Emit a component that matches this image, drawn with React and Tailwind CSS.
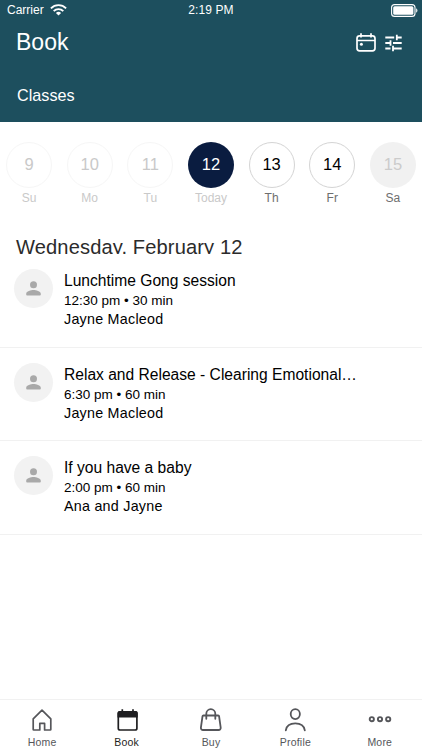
import React from 'react';
import clsx from 'clsx';

const days = [
  { date: 9, label: 'Su', state: 'past' },
  { date: 10, label: 'Mo', state: 'past' },
  { date: 11, label: 'Tu', state: 'past' },
  { date: 12, label: 'Today', state: 'selected' },
  { date: 13, label: 'Th', state: 'open' },
  { date: 14, label: 'Fr', state: 'open' },
  { date: 15, label: 'Sa', state: 'empty' },
];

const classes = [
  { title: 'Lunchtime Gong session', time: '12:30 pm • 30 min', teacher: 'Jayne Macleod' },
  { title: 'Relax and Release - Clearing Emotional…', time: '6:30 pm • 60 min', teacher: 'Jayne Macleod' },
  { title: 'If you have a baby', time: '2:00 pm • 60 min', teacher: 'Ana and Jayne' },
];

const circleStyles = {
  past: 'border border-[#f6f6f6] text-[#c9c9c9]',
  selected: 'bg-[#0a1c40] text-white',
  open: 'border border-[#d4d4d4] text-black',
  empty: 'bg-[#f1f1f1] text-[#cbcbcb]',
};

const WifiIcon = () => (
  <svg width="17" height="12" viewBox="0 0 17 12" fill="none" stroke="white" strokeWidth="1.9">
    <path d="M0.9 4.3a10.8 10.8 0 0 1 15.2 0" />
    <path d="M3.7 7.1a6.8 6.8 0 0 1 9.6 0" />
    <path d="M8.5 11.6L5.9 9a3.7 3.7 0 0 1 5.2 0z" fill="white" stroke="none" />
  </svg>
);

const BatteryIcon = () => (
  <svg width="27" height="13" viewBox="0 0 27 13" fill="none">
    <rect x="0.6" y="0.6" width="23.4" height="11.8" rx="3" stroke="white" strokeWidth="1.1" />
    <rect x="2.2" y="2.2" width="20.2" height="8.6" rx="1.5" fill="white" />
    <path d="M25.2 4.3c1.7 0.7 1.7 3.7 0 4.4z" fill="white" />
  </svg>
);

const CalendarIcon = () => (
  <svg width="20" height="19" viewBox="0 0 20 19" fill="none" stroke="white" strokeWidth="1.7">
    <rect x="1" y="2.8" width="18" height="15" rx="2.6" />
    <path d="M1 7.5h18M5 0.3v4.2M15 0.3v4.2" />
    <circle cx="5.4" cy="11.3" r="1.5" fill="white" stroke="none" />
  </svg>
);

const TuneIcon = () => (
  <svg width="17" height="18" viewBox="0 0 17 18" fill="none" stroke="white" strokeWidth="1.8">
    <path d="M0.3 3.5h8.9M11.8 3.5h4.9M11.8 0.8v5.4" />
    <path d="M0.3 9h4.9M8 9h8.7M5.5 6.3v5.4" />
    <path d="M0.3 14.5h5.2M7.8 14.5h8.9M8 11.8v5.4" />
  </svg>
);

const PersonIcon = () => (
  <svg width="15" height="15" viewBox="0 0 15 15" fill="#a9a9a9">
    <circle cx="7.5" cy="3.7" r="3.5" />
    <path d="M0.2 12.7c0-2.4 4.9-3.7 7.3-3.7s7.3 1.3 7.3 3.7v0.9a0.9 0.9 0 0 1-0.9 0.9H1.1a0.9 0.9 0 0 1-0.9-0.9z" />
  </svg>
);

const HomeIcon = () => (
  <svg width="24" height="24" viewBox="0 0 24 24" fill="none" stroke="#55565a" strokeWidth="1.7" strokeLinejoin="round">
    <path d="M3.2 10.8L12 2.2l8.8 8.6v10.6a0.6 0.6 0 0 1-0.6 0.6h-5.6v-6.6H9.8V22H3.8a0.6 0.6 0 0 1-0.6-0.6z" />
  </svg>
);

const BookIcon = () => (
  <svg width="24" height="24" viewBox="0 0 24 24" fill="none" stroke="#1f1f21" strokeWidth="1.7">
    <rect x="3.3" y="3.8" width="18.6" height="18.2" rx="1.8" />
    <path d="M2.5 9.5V5a2 2 0 0 1 2-2h16.200a2 2 0 0 1 2 2v4.500z" fill="#1f1f21" stroke="none" />
    <path d="M7.3 1.200v3M18 1.200v3" />
  </svg>
);

const BagIcon = () => (
  <svg width="24" height="24" viewBox="0 0 24 24" fill="none" stroke="#55565a" strokeWidth="1.8" strokeLinecap="round" strokeLinejoin="round">
    <path d="M4.5 7.5h14.6a1 1 0 0 1 1 0.8l1.6 11.3a2.1 2.1 0 0 1-2.1 2.4H4a2.1 2.1 0 0 1-2.1-2.4L3.5 8.3a1 1 0 0 1 1-0.8z" />
    <path d="M7.3 10.8V5.700a4.500 4.500 0 0 1 9 0v5.100" />
  </svg>
);

const ProfileIcon = () => (
  <svg width="24" height="24" viewBox="0 0 24 24" fill="none" stroke="#55565a" strokeWidth="1.8" strokeLinecap="round">
    <ellipse cx="12.300" cy="6.100" rx="4.600" ry="5" />
    <path d="M2.800 22.300c0.700-4.400 4.200-6.900 9.500-6.900s8.800 2.500 9.500 6.900" />
  </svg>
);

const MoreIcon = () => (
  <svg width="24" height="24" viewBox="0 0 24 24" fill="none" stroke="#55565a" strokeWidth="1.9">
    <circle cx="3.8" cy="11.2" r="2.1" />
    <circle cx="12" cy="11.2" r="2.1" />
    <circle cx="20.2" cy="11.2" r="2.1" />
  </svg>
);

const tabs = [
  { label: 'Home', icon: HomeIcon },
  { label: 'Book', icon: BookIcon, active: true },
  { label: 'Buy', icon: BagIcon },
  { label: 'Profile', icon: ProfileIcon },
  { label: 'More', icon: MoreIcon },
];

const Header = () => (
  <header className="h-[122px] shrink-0 bg-[#1d4f5e] text-white">
    {/* Status bar */}
    <div className="grid h-5 grid-cols-3 items-center pl-[7px] pr-1 text-[12px]">
      <div className="flex items-center gap-1.5">
        <span>Carrier</span>
        <WifiIcon />
      </div>
      <span className="pr-[3px] text-center tracking-[0.1px]">2:19 PM</span>
      <div className="flex justify-end">
        <BatteryIcon />
      </div>
    </div>

    <div className="flex h-[45px] items-center justify-between pl-4 pr-5">
      <h1 className="pb-0.5 text-[23px] leading-[34px]">Book</h1>
      <div className="flex items-center gap-[9px]">
        <CalendarIcon />
        <TuneIcon />
      </div>
    </div>

    <h2 className="mt-[18px] pl-[17px] text-[16.2px] leading-6">Classes</h2>
  </header>
);

const DayPicker = () => (
  <div className="flex h-[88px] justify-between px-[6px] pt-[19.5px]">
    {days.map((day) => (
      <div key={day.date} className="flex w-[46px] flex-col items-center">
        <div className={clsx('flex size-[46px] shrink-0 items-center justify-center rounded-full text-[16.5px]', circleStyles[day.state])}>
          {day.date}
        </div>
        <span
          className={clsx(
            'mt-[2px] text-[12px] leading-[17px]',
            day.state === 'past' || day.state === 'selected' ? 'text-[#c9c9c9]' : 'text-[#6e6e6e]'
          )}
        >
          {day.label}
        </span>
      </div>
    ))}
  </div>
);

const ClassRow = ({ title, time, teacher }) => (
  <li className="flex h-[93.7px] border-b border-[#f1f1f1] pl-[14px] pt-[15px]">
    <div className="flex size-[39px] shrink-0 items-center justify-center rounded-full bg-[#f2f2f2]">
      <PersonIcon />
    </div>
    <div className="ml-[11px] mt-px whitespace-nowrap text-black">
      <h3 className="text-[15.6px] leading-[22px]">{title}</h3>
      <p className="text-[13.5px] leading-[18px]">{time}</p>
      <p className="text-[14.3px] leading-[19px] tracking-[0.25px]">{teacher}</p>
    </div>
  </li>
);

const TabBar = () => (
  <nav className="grid h-[51px] shrink-0 grid-cols-5 border-t border-[#f1f1f1]">
    {tabs.map(({ label, icon: Icon, active }) => (
      <a key={label} className={clsx('flex flex-col items-center pt-2 text-[10.5px]', active ? 'text-[#1f1f21]' : 'text-[#55565a]')}>
        <Icon />
        <span className="mt-[3px] leading-[15px] tracking-[0.2px]">{label}</span>
      </a>
    ))}
  </nav>
);

export default function App() {
  return (
    <div className="flex h-[750px] w-[422px] flex-col overflow-hidden bg-white font-['Liberation_Sans',Arial,sans-serif]">
      <Header />
      <DayPicker />
      <main className="flex-1">
        {/* Tight box trims the descenders of the date */}
        <h2 className="mt-[26px] h-[18px] overflow-hidden pl-4 text-[20.1px] leading-[22px] tracking-[0.13px] text-[#2b2b2b]">
          Wednesday, February 12
        </h2>
        <ul>
          {classes.map((item) => (
            <ClassRow key={item.title} {...item} />
          ))}
        </ul>
      </main>
      <TabBar />
    </div>
  );
}
